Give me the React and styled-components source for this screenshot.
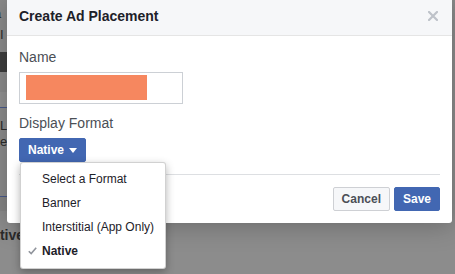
import React from 'react'
import styled, { createGlobalStyle } from 'styled-components'

const GlobalStyle = createGlobalStyle`
  body {
    margin: 0;
    font-family: "Liberation Sans", Arial, sans-serif;
  }
`

const Page = styled.div`
  position: relative;
  width: 455px;
  height: 274px;
  overflow: hidden;
  background: #8c8c8c;
`

const BackPage = styled.div`
  display: flex;
  flex-direction: column;
  width: 7px;
  padding-top: 6px;
  color: #2b2b2b;
  font-size: 13px;
`

const BackText = styled.div`
  height: ${p => p.h}px;
  line-height: ${p => p.h}px;
  font-size: ${p => p.size || 13}px;
  font-weight: ${p => (p.bold ? 'bold' : 'normal')};
  white-space: nowrap;
  margin-left: ${p => p.shift || 0}px;
`

const BackBlock = styled.div`
  height: ${p => p.h}px;
  background: ${p => p.bg};
  border-bottom: ${p => (p.line ? `1px ${p.dotted ? 'dotted' : 'solid'} ${p.line}` : 'none')};
`

const Dialog = styled.div`
  position: absolute;
  left: 7px;
  top: -4px;
  width: 445px;
  background: #fff;
  border-radius: 3px;
  box-shadow: 0 2px 26px rgba(0, 0, 0, 0.25);
`

const Header = styled.div`
  height: 39px;
  display: flex;
  align-items: center;
  justify-content: space-between;
  padding: 0 12px;
  background: #f6f7f9;
  border-bottom: 1px solid #e5e5e5;
  border-radius: 3px 3px 0 0;
`

const Title = styled.h2`
  margin: 0;
  font-size: 14px;
  font-weight: bold;
  color: #1d2129;
`

const Close = styled.button`
  border: none;
  background: none;
  padding: 0;
  width: 12px;
  height: 12px;
  display: flex;
  align-items: center;
  justify-content: center;
  margin-right: 1px;
`

const Body = styled.div`
  padding: 12px 12px 0;
  display: flex;
  flex-direction: column;
  align-items: flex-start;
`

const Label = styled.label`
  font-size: 14px;
  line-height: 18px;
  color: #4b4f56;
  margin-top: ${p => p.top || 0}px;
`

const Input = styled.div`
  margin-top: 6px;
  width: 164px;
  height: 32px;
  box-sizing: border-box;
  border: 1px solid #ccd0d5;
  padding: 2px 6px;
`

const Redacted = styled.div`
  width: 121px;
  height: 25px;
  background: #f6875f;
`

const SelectWrap = styled.div`
  position: relative;
  margin-top: 6px;
`

const Button = styled.button`
  height: 24px;
  box-sizing: border-box;
  padding: 0 8px;
  border-radius: 2px;
  font-family: inherit;
  font-size: 12px;
  font-weight: bold;
  display: flex;
  align-items: center;
  gap: 5px;
  border: 1px solid ${p => (p.primary ? '#4267b2' : '#ced0d4')};
  background: ${p => (p.primary ? '#4267b2' : '#f6f7f9')};
  color: ${p => (p.primary ? '#fff' : '#4b4f56')};
`

const Caret = styled.span`
  width: 0;
  height: 0;
  border-left: 4px solid transparent;
  border-right: 4px solid transparent;
  border-top: 5px solid #fff;
  margin-top: 1px;
`

const Menu = styled.ul`
  position: absolute;
  left: 1px;
  top: 100%;
  width: 146px;
  box-sizing: border-box;
  margin: 0;
  padding: 4px 0 5px;
  list-style: none;
  background: #fff;
  border: 1px solid rgba(0, 0, 0, 0.18);
  border-radius: 3px;
  box-shadow: 0 3px 8px rgba(0, 0, 0, 0.3);
  z-index: 2;
`

const MenuItem = styled.li`
  position: relative;
  height: 24px;
  line-height: 24px;
  padding-left: 21px;
  font-size: 12px;
  white-space: nowrap;
  color: #1d2129;
  font-weight: ${p => (p.selected ? 'bold' : 'normal')};
`

const Check = styled.svg`
  position: absolute;
  left: 7px;
  top: 8px;
`

const Footer = styled.div`
  margin: 12px 12px 0;
  padding: 12px 0 12px;
  border-top: 1px solid #dddfe2;
  display: flex;
  justify-content: flex-end;
  gap: 4px;
`

const formats = ['Select a Format', 'Banner', 'Interstitial (App Only)', 'Native']

function App() {
  const selected = 'Native'
  return (
    <Page>
      <GlobalStyle />
      <BackPage>
        <BackText h={16} shift={-6}>a</BackText>
        <BackBlock h={6} bg="#8c8c8c" />
        <BackText h={14}>I</BackText>
        <BackBlock h={10} bg="#8c8c8c" />
        <BackBlock h={20} bg="#3d3d3d" />
        <BackBlock h={20} bg="#8c8c8c" />
        <BackBlock h={15} bg="#939393" line="#4a5a8c" />
        <BackBlock h={10} bg="#8c8c8c" />
        <BackText h={16}>L</BackText>
        <BackText h={16}>e</BackText>
        <BackBlock h={46} bg="#8c8c8c" line="#4a5a8c" />
        <BackBlock h={14} bg="#858585" />
        <BackBlock h={14} bg="#8c8c8c" />
        <BackText h={20} bold shift={-18} size={14}>Native</BackText>
      </BackPage>

      <Dialog>
        <Header>
          <Title>Create Ad Placement</Title>
          <Close aria-label="Close">
            <svg width="10" height="10" viewBox="0 0 10 10">
              <path d="M1 1 L9 9 M9 1 L1 9" stroke="#bec2c9" strokeWidth="2.2" strokeLinecap="square" />
            </svg>
          </Close>
        </Header>
        <Body>
          <Label>Name</Label>
          <Input>
            <Redacted />
          </Input>
          <Label top={10}>Display Format</Label>
          <SelectWrap>
            <Button primary>
              {selected}
              <Caret />
            </Button>
            <Menu>
              {formats.map(f => (
                <MenuItem key={f} selected={f === selected}>
                  {f === selected && (
                    <Check width="9" height="8" viewBox="0 0 9 8">
                      <path d="M0.8 4.2 L3.2 6.6 L8.2 0.8" fill="none" stroke="#90949c" strokeWidth="1.6" />
                    </Check>
                  )}
                  {f}
                </MenuItem>
              ))}
            </Menu>
          </SelectWrap>
        </Body>
        <Footer>
          <Button>Cancel</Button>
          <Button primary>Save</Button>
        </Footer>
      </Dialog>
    </Page>
  )
}

export default App
